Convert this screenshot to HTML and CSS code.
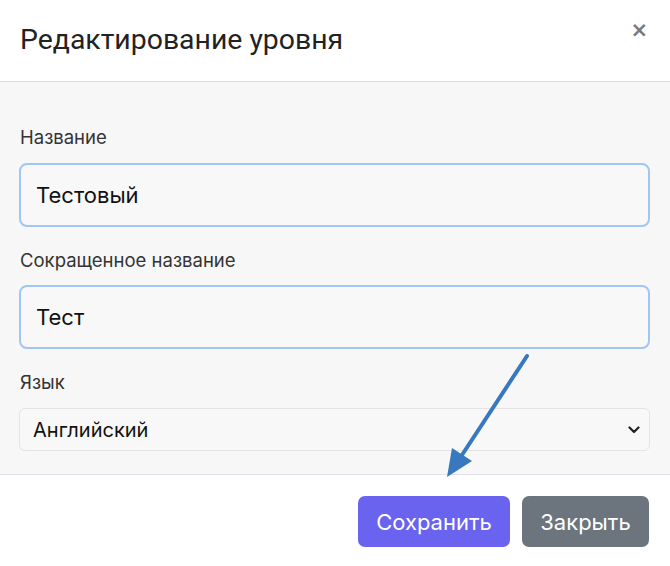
FILE: index.html
```html
<!DOCTYPE html>
<html lang="ru">
<head>
<meta charset="utf-8">
<link rel="stylesheet" href="styles.css">
</head>
<body>
<div class="modal">
  <div class="modal-header">
    <h5 class="modal-title">Редактирование уровня</h5>
    <span class="close">×</span>
  </div>
  <div class="modal-body">
    <div class="group">
      <label class="label">Название</label>
      <div class="input">Тестовый</div>
    </div>
    <div class="group">
      <label class="label">Сокращенное название</label>
      <div class="input">Тест</div>
    </div>
    <div class="group group-last">
      <label class="label">Язык</label>
      <div class="select">
        <span>Английский</span>
        <svg class="chev" width="12" height="8" viewBox="0 0 12 8"><path d="M1.5 1.5 L6 6 L10.5 1.5" fill="none" stroke="#222" stroke-width="2.2" stroke-linecap="round" stroke-linejoin="round"/></svg>
      </div>
    </div>
  </div>
  <div class="modal-footer">
    <button class="btn btn-primary">Сохранить</button>
    <button class="btn btn-secondary">Закрыть</button>
  </div>
  <svg class="arrow" width="670" height="566" viewBox="0 0 670 566">
    <line x1="527" y1="356" x2="462" y2="455" stroke="#3878be" stroke-width="4" stroke-linecap="round"/>
    <polygon points="447,477 452,448 472,461" fill="#3878be"/>
  </svg>
</div>
</body>
</html>
```
FILE: styles.css
```css
* { box-sizing: border-box; }
html, body { margin: 0; padding: 0; background: #fff; }
body { font-family: Inter, "Noto Sans", sans-serif; color: #212529; }
.modal { position: relative; width: 670px; height: 566px; overflow: hidden; background: #fff; }
.modal-header {
  height: 82px;
  display: flex; align-items: center; justify-content: space-between;
  padding: 0 20px 2px 20px;
  border-bottom: 1px solid #dedede;
  background: #fff;
}
.modal-title { margin: 0; font-family: Roboto, "Liberation Sans", sans-serif; font-weight: 400; font-size: 28.4px; color: #222; }
.close { font-family: "DejaVu Sans", sans-serif; font-size: 21px; color: #7a7a7a; font-weight: 700; margin-top: -20px; margin-right: 2px; }
.modal-body {
  height: 393px;
  background: #f7f7f7;
  padding: 44px 20px 0 19px;
  display: flex; flex-direction: column; gap: 22px;
  border-bottom: 1px solid #e2e0ea;
}
.group { display: flex; flex-direction: column; }
.label { font-size: 18.5px; color: #333; line-height: 22px; margin-bottom: 14px; padding-left: 1px; }
.group:first-child .label { margin-bottom: 15px; }
.group-last .label { margin-bottom: 15px; }
.input {
  height: 64px;
  border: 2px solid #a0c6f5;
  border-radius: 8px;
  background: #f8f8f8;
  display: flex; align-items: center;
  padding: 0 15px;
  font-size: 22px; color: #111;
}
.select {
  height: 43px;
  border: 1px solid #e4e4e4;
  border-radius: 6px;
  background: #f8f8f8;
  display: flex; align-items: center; justify-content: space-between;
  padding: 0 9px 0 13px;
  font-size: 20px; color: #111;
}
.modal-footer {
  display: flex; justify-content: flex-end; gap: 12px;
  padding: 21px 21px 0 0;
  background: #fff;
}
.btn {
  border: 0; border-radius: 7px; color: #fff;
  font-family: Inter, "Noto Sans", sans-serif; font-size: 22px;
  height: 51px; padding: 0 12px;
}
.btn-primary { background: #6a63ef; width: 152px; }
.btn-secondary { background: #6c757d; width: 127px; }
.arrow { position: absolute; left: 0; top: 0; pointer-events: none; }
```
